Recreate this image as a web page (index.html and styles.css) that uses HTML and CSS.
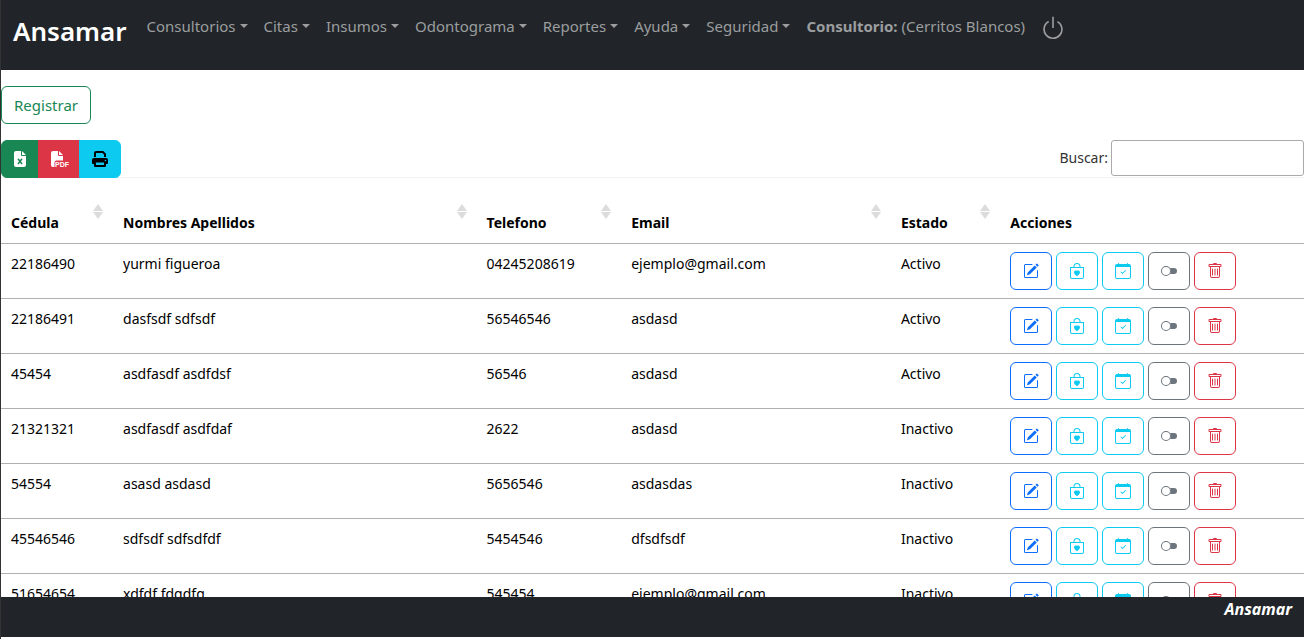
FILE: index.html
```html
<!DOCTYPE html>
<html lang="es">
<head>
<meta charset="utf-8">
<title>Ansamar</title>
<link rel="stylesheet" href="styles.css">
</head>
<body>
<svg class="sprite" aria-hidden="true">
  <symbol id="edit" viewBox="0 0 16 16"><path d="M15.502 1.94a.5.5 0 0 1 0 .706L14.459 3.69l-2-2L13.502.646a.5.5 0 0 1 .707 0l1.293 1.293zm-1.75 2.456-2-2L4.939 9.21a.5.5 0 0 0-.121.196l-.805 2.414a.25.25 0 0 0 .316.316l2.414-.805a.5.5 0 0 0 .196-.12l6.813-6.814z"/><path d="M1 13.5A1.5 1.5 0 0 0 2.5 15h11a1.5 1.5 0 0 0 1.5-1.5v-6a.5.5 0 0 0-1 0v6a.5.5 0 0 1-.5.5h-11a.5.5 0 0 1-.5-.5v-11a.5.5 0 0 1 .5-.5H9a.5.5 0 0 0 0-1H2.5A1.5 1.5 0 0 0 1 2.5v11z"/></symbol>
  <symbol id="bag" viewBox="0 0 16 16"><path d="M10.5 3.5a2.5 2.5 0 0 0-5 0V4h5v-.5Zm1 0V4H15v10a2 2 0 0 1-2 2H3a2 2 0 0 1-2-2V4h3.5v-.5a3.5 3.5 0 1 1 7 0ZM14 14V5H2v9a1 1 0 0 0 1 1h10a1 1 0 0 0 1-1ZM8 7.993c1.664-1.711 5.825 1.283 0 5.132-5.825-3.85-1.664-6.843 0-5.132Z"/></symbol>
  <symbol id="calendar" viewBox="0 0 16 16"><path d="M10.854 7.146a.5.5 0 0 1 0 .708l-3 3a.5.5 0 0 1-.708 0l-1.5-1.5a.5.5 0 1 1 .708-.708L7.5 9.793l2.646-2.647a.5.5 0 0 1 .708 0z"/><path d="M3.500 0a.5.5 0 0 1 .5.5V1h8V.5a.5.5 0 0 1 1 0V1h1a2 2 0 0 1 2 2v11a2 2 0 0 1-2 2H2a2 2 0 0 1-2-2V3a2 2 0 0 1 2-2h1V.5a.5.5 0 0 1 .5-.5zM1 4v10a1 1 0 0 0 1 1h12a1 1 0 0 0 1-1V4H1z"/></symbol>
  <symbol id="toggle" viewBox="0 0 16 16"><path d="M9 11c.628-.836 1-1.874 1-3a4.978 4.978 0 0 0-1-3h4a3 3 0 1 1 0 6H9z"/><path d="M5 12a4 4 0 1 1 0-8 4 4 0 0 1 0 8zm0 1A5 5 0 1 0 5 3a5 5 0 0 0 0 10z"/></symbol>
  <symbol id="trash" viewBox="0 0 16 16"><path d="M5.5 5.5A.5.5 0 0 1 6 6v6a.5.5 0 0 1-1 0V6a.5.5 0 0 1 .5-.5zm2.5 0a.5.5 0 0 1 .5.5v6a.5.5 0 0 1-1 0V6a.5.5 0 0 1 .5-.5zm3 .5a.5.5 0 0 0-1 0v6a.5.5 0 0 0 1 0V6z"/><path fill-rule="evenodd" d="M14.5 3a1 1 0 0 1-1 1H13v9a2 2 0 0 1-2 2H5a2 2 0 0 1-2-2V4h-.5a1 1 0 0 1-1-1V2a1 1 0 0 1 1-1H6a1 1 0 0 1 1-1h2a1 1 0 0 1 1 1h3.5a1 1 0 0 1 1 1v1zM4.118 4 4 4.059V13a1 1 0 0 0 1 1h6a1 1 0 0 0 1-1V4.059L11.882 4H4.118zM2.5 3V2h11v1h-11z"/></symbol>
</svg>

<header class="navbar">
  <a class="brand" href="#">Ansamar</a>
  <nav class="menu">
    <button type="button" class="menu-item caret">Consultorios</button>
    <button type="button" class="menu-item caret">Citas</button>
    <button type="button" class="menu-item caret">Insumos</button>
    <button type="button" class="menu-item caret">Odontograma</button>
    <button type="button" class="menu-item caret">Reportes</button>
    <button type="button" class="menu-item caret">Ayuda</button>
    <button type="button" class="menu-item caret">Seguridad</button>
    <a class="menu-item" href="#"><b>Consultorio:</b> (Cerritos Blancos)</a>
    <a class="power" href="#" aria-label="Salir"><svg viewBox="0 0 16 16" width="26" height="26"><path d="M7.5 1v7h1V1h-1z"/><path d="M3 8.812a4.999 4.999 0 0 1 2.578-4.375l-.485-.874A6 6 0 1 0 11 3.616l-.501.865A5 5 0 1 1 3 8.812z"/></svg></a>
  </nav>
</header>

<main class="content">
  <button type="button" class="btn register">Registrar</button>
  <div class="toolbar">
    <div class="export">
      <button type="button" class="btn excel" aria-label="Exportar a Excel"><svg width="12" height="16" viewBox="0 0 12 16"><path d="M2 0H7V4a1 1 0 0 0 1 1H12V14a2 2 0 0 1-2 2H2a2 2 0 0 1-2-2V2A2 2 0 0 1 2 0ZM8 0l4 4H8Z"/><path class="cross" d="M4 7.800 8 13M8 7.800 4 13"/></svg></button>
      <button type="button" class="btn pdf" aria-label="Exportar a PDF"><svg width="16" height="16" viewBox="0 0 16 16"><path d="M2 0H7V4a1 1 0 0 0 1 1H12V9.500H5.500a2 2 0 0 0-2 2V16H2a2 2 0 0 1-2-2V2A2 2 0 0 1 2 0ZM8 0l4 4H8Z"/><text x="4" y="16">PDF</text></svg></button>
      <button type="button" class="btn print" aria-label="Imprimir"><svg width="16" height="16" viewBox="0 0 16 16"><path fill-rule="evenodd" d="M4 0h7.200L14 2.800V6h-2V3.600L10.400 2H4v4H2V2a2 2 0 0 1 2-2ZM2 7h12a2 2 0 0 1 2 2v3a1 1 0 0 1-1 1h-1v2a1 1 0 0 1-1 1H3a1 1 0 0 1-1-1v-2H1a1 1 0 0 1-1-1V9a2 2 0 0 1 2-2ZM4 11.500V14h8v-2.500ZM13.500 8.700a.8.8 0 1 0 0 1.600.8.8 0 0 0 0-1.600Z"/></svg></button>
    </div>
    <div class="search">
      <label for="buscar">Buscar:</label>
      <input id="buscar" type="search">
    </div>
  </div>
  <table class="patients">
    <colgroup><col class="c-id"><col class="c-name"><col class="c-phone"><col class="c-mail"><col class="c-state"><col></colgroup>
    <thead>
      <tr>
        <th><div class="head">Cédula<span class="sort"></span></div></th>
        <th><div class="head">Nombres Apellidos<span class="sort"></span></div></th>
        <th><div class="head">Telefono<span class="sort"></span></div></th>
        <th><div class="head">Email<span class="sort"></span></div></th>
        <th><div class="head">Estado<span class="sort"></span></div></th>
        <th><div class="head">Acciones</div></th>
      </tr>
    </thead>
    <tbody id="rows"></tbody>
  </table>
</main>

<footer class="footer">Ansamar</footer>
<script src="script.js"></script>
</body>
</html>
```
FILE: styles.css
```css
* { box-sizing: border-box; }

body {
  margin: 0;
  height: 100vh;
  display: flex;
  flex-direction: column;
  padding: 0 1px 2px 0;
  border-left: 1px solid #333333;
  overflow: hidden;
  background: #fff;
  color: #000;
  font: 14px/24px "Noto Sans", "Open Sans", sans-serif;
}

button, input { font: inherit; }
button { cursor: pointer; }
a { text-decoration: none; }
svg { display: block; fill: currentColor; }
.sprite { display: none; }

.navbar {
  flex: none;
  display: flex;
  align-items: flex-start;
  min-height: 70px;
  padding: 8px 12px;
  background: #212529;
}
.brand {
  margin-right: 12px;
  color: #fff;
  font-size: 26px;
  font-weight: 600;
  line-height: 46px;
}
.menu { display: flex; align-items: flex-start; }
.menu-item {
  display: flex;
  align-items: center;
  gap: 4px;
  padding: 6px 8px;
  border: 0;
  background: none;
  color: #9b9d9f;
  font-size: 15px;
  line-height: 24px;
  white-space: nowrap;
}
.caret::after {
  content: "";
  border: 4px solid transparent;
  border-top-color: currentColor;
  border-bottom: 0;
}
.power { padding: 7px; color: #9b9d9f; }

.content {
  flex: 1;
  min-height: 0;
  padding-top: 16px;
  overflow: hidden;
}

.btn {
  display: inline-flex;
  align-items: center;
  justify-content: center;
  height: 38px;
  padding: 0 12px;
  border: 1px solid currentColor;
  border-radius: 6px;
  background: transparent;
}
.register { display: flex; margin-bottom: 16px; color: #198754; font-size: 15px; }

.toolbar {
  display: flex;
  justify-content: space-between;
  align-items: flex-start;
  background: linear-gradient(#f2f2f2, #f2f2f2) bottom / 100% 1px no-repeat;
}
.export { display: flex; }
.export .btn + .btn { margin-left: -1px; }
.export .btn:not(:first-child) { border-top-left-radius: 0; border-bottom-left-radius: 0; }
.export .btn:not(:last-child) { border-top-right-radius: 0; border-bottom-right-radius: 0; }
.excel { background: #198754; border-color: #198754; color: #fff; }
.pdf { background: #dc3545; border-color: #dc3545; color: #fff; }
.print { background: #0dcaf0; border-color: #0dcaf0; color: #000; }
.cross { fill: none; stroke: #198754; stroke-width: 1.5; }
.pdf svg { overflow: visible; }
.pdf text { font: bold 7px "Liberation Sans", sans-serif; }

.search { display: flex; align-items: center; gap: 3px; color: #333; }
.search input {
  width: 193px;
  height: 36px;
  padding: 5px;
  border: 1px solid #aaa;
  border-radius: 3px;
  background: transparent;
}

.patients {
  width: 100%;
  table-layout: fixed;
  border-spacing: 0;
}
.c-id { width: 8.6%; }
.c-name { width: 27.9%; }
.c-phone { width: 11.1%; }
.c-mail { width: 20.7%; }
.c-state { width: 8.4%; }
.patients th {
  height: 66px;
  padding: 0 10px 8px;
  border-bottom: 1px solid #b0b0b0;
  text-align: left;
  vertical-align: bottom;
}
.head { display: flex; justify-content: space-between; align-items: flex-end; }
.sort { display: grid; gap: 1px; margin-bottom: 16px; }
.sort::before, .sort::after { content: ""; border: 5px solid transparent; }
.sort::before { border-top: 0; border-bottom: 7px solid #dcdcdc; }
.sort::after { border-bottom: 0; border-top: 7px solid #dcdcdc; }
.patients td {
  padding: 8px 10px;
  border-bottom: 1px solid #b0b0b0;
  vertical-align: top;
}
.actions { display: flex; gap: 4px; }
.blue { color: #0d6efd; }
.cyan { color: #0dcaf0; }
.gray { color: #6c757d; }
.red { color: #dc3545; }

.footer {
  flex: none;
  height: 40px;
  padding: 0 12px;
  background: #212529;
  color: #fff;
  font-size: 16px;
  font-style: italic;
  font-weight: 700;
  text-align: right;
}
```
FILE: script.js
```js
const patients = [
  ["22186490", "yurmi figueroa", "04245208619", "ejemplo@gmail.com", "Activo"],
  ["22186491", "dasfsdf sdfsdf", "56546546", "asdasd", "Activo"],
  ["45454", "asdfasdf asdfdsf", "56546", "asdasd", "Activo"],
  ["21321321", "asdfasdf asdfdaf", "2622", "asdasd", "Inactivo"],
  ["54554", "asasd asdasd", "5656546", "asdasdas", "Inactivo"],
  ["45546546", "sdfsdf sdfsdfdf", "5454546", "dfsdfsdf", "Inactivo"],
  ["51654654", "xdfdf fdgdfg", "545454", "ejemplo@gmail.com", "Inactivo"]
];
const actions = [
  ["edit", "blue", "Editar"],
  ["bag", "cyan", "Historia"],
  ["calendar", "cyan", "Cita"],
  ["toggle", "gray", "Cambiar estado"],
  ["trash", "red", "Eliminar"]
];
const buttons = actions.map(([icon, color, label]) =>
  `<button type="button" class="btn ${color}" aria-label="${label}"><svg width="16" height="16"><use href="#${icon}"/></svg></button>`
).join("");
document.getElementById("rows").innerHTML = patients.map(row =>
  `<tr>${row.map(value => `<td>${value}</td>`).join("")}<td><div class="actions">${buttons}</div></td></tr>`
).join("");
```
